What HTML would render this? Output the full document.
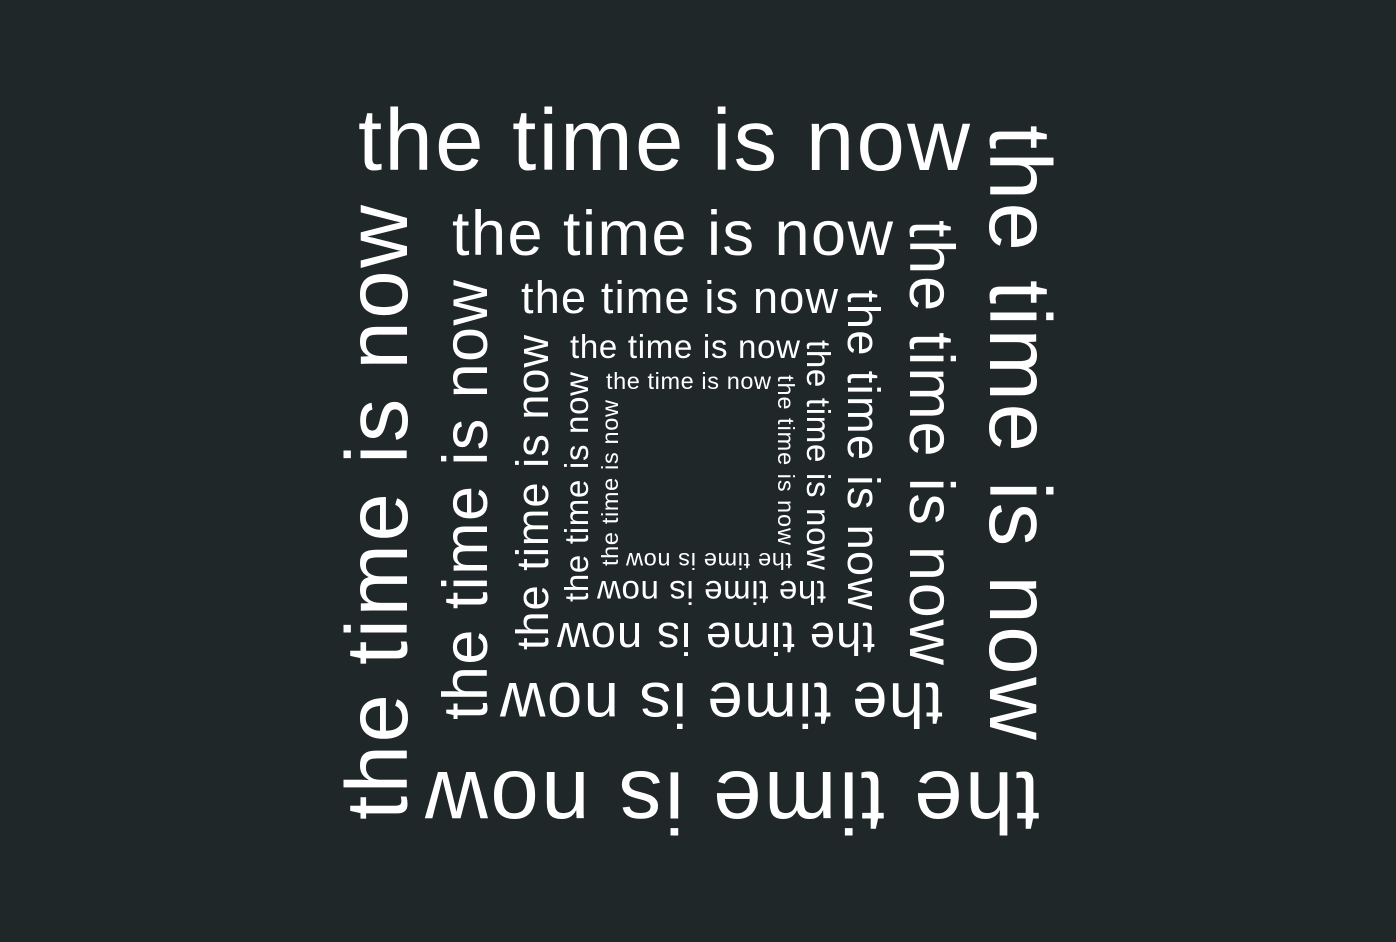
<!DOCTYPE html>
<html><head><meta charset="utf-8"><style>
html,body{margin:0;padding:0;background:#1f2729;}
svg{display:block}
text{font-family:"Liberation Sans","DejaVu Sans",sans-serif;fill:#fff;}
</style></head><body>
<svg width="1396" height="942" viewBox="0 0 1396 942" xmlns="http://www.w3.org/2000/svg">
<rect width="1396" height="942" fill="#1f2729"/>
<!-- ring 1 -->
<g font-size="87">
<text x="358" y="170" textLength="612" lengthAdjust="spacing">the time is now</text>
<text transform="translate(990,125) rotate(90)" textLength="615" lengthAdjust="spacing">the time is now</text>
<text transform="translate(1040,772) rotate(180)" textLength="615" lengthAdjust="spacing">the time is now</text>
<text transform="translate(407,820) rotate(-90)" textLength="615" lengthAdjust="spacing">the time is now</text>
</g>
<!-- ring 2 -->
<g font-size="63">
<text x="452" y="255" textLength="441" lengthAdjust="spacing">the time is now</text>
<text transform="translate(910,220) rotate(90)" textLength="445" lengthAdjust="spacing">the time is now</text>
<text transform="translate(943,683) rotate(180)" textLength="443" lengthAdjust="spacing">the time is now</text>
<text transform="translate(487,720) rotate(-90)" textLength="440" lengthAdjust="spacing">the time is now</text>
</g>
<!-- ring 3 -->
<g font-size="45">
<text x="521" y="313" textLength="317" lengthAdjust="spacing">the time is now</text>
<text transform="translate(848,290) rotate(90)" textLength="320" lengthAdjust="spacing">the time is now</text>
<text transform="translate(875,623) rotate(180)" textLength="318" lengthAdjust="spacing">the time is now</text>
<text transform="translate(548,650) rotate(-90)" textLength="315" lengthAdjust="spacing">the time is now</text>
</g>
<!-- ring 4 -->
<g font-size="33">
<text x="570" y="358" textLength="230" lengthAdjust="spacing">the time is now</text>
<text transform="translate(807,340) rotate(90)" textLength="230" lengthAdjust="spacing">the time is now</text>
<text transform="translate(826,581) rotate(180)" textLength="229" lengthAdjust="spacing">the time is now</text>
<text transform="translate(588,602) rotate(-90)" textLength="230" lengthAdjust="spacing">the time is now</text>
</g>
<!-- ring 5 -->
<g font-size="23.5">
<text x="606" y="389" textLength="165" lengthAdjust="spacing">the time is now</text>
<text transform="translate(778,375) rotate(90)" textLength="170" lengthAdjust="spacing">the time is now</text>
<text transform="translate(792,553) rotate(180)" textLength="166" lengthAdjust="spacing">the time is now</text>
<text transform="translate(618,566) rotate(-90)" textLength="166" lengthAdjust="spacing">the time is now</text>
</g>
</svg>
</body></html>
